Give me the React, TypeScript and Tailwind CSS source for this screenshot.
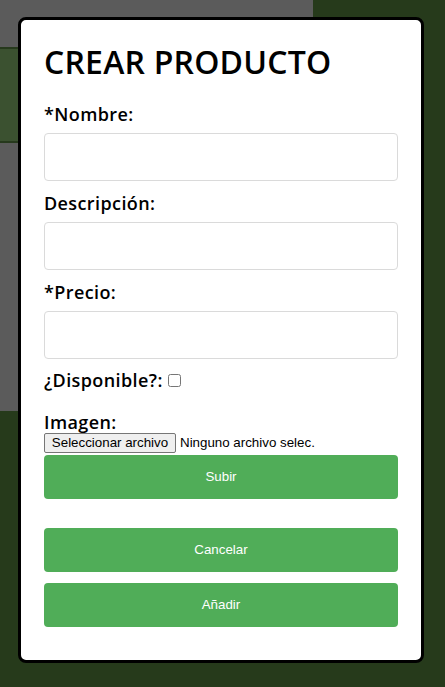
import React from "react";

const labelCls = "block text-[18px] font-semibold leading-[22px] tracking-[0.4px] text-black";
const inputCls = "block h-[48px] w-full rounded-[4px] border border-[#dadada] bg-white px-3 outline-none";
const buttonCls =
  "flex h-[44px] w-full items-center justify-center rounded-[4px] bg-[#50ad58] text-[13.33px] text-white";

function Field({ label, first }: { label: string; first?: boolean }) {
  return (
    <div className={first ? "mt-[22px]" : "mt-[11px]"}>
      <label className={labelCls}>{label}</label>
      <input type="text" className={`${inputCls} mt-[8px]`} />
    </div>
  );
}

export default function App() {
  return (
    <div className="relative h-[687px] w-[445px] overflow-hidden bg-[#263a1b]" style={{ fontFamily: "'Open Sans', Lato, sans-serif" }}>
      {/* page behind the modal */}
      <div className="w-[313px]">
        <div className="h-[47px] bg-[#5b5b5b]" />
        <div className="h-[96px] border-y-2 border-[#26391c] bg-[#3b5130]" />
        <div className="h-[268px] bg-[#5b5b5b]" />
      </div>

      {/* modal */}
      <div className="absolute left-[18px] top-[17px] h-[646px] w-[406px] rounded-[8px] border-[3px] border-black bg-white px-[23px]">
        <h1 className="mt-[23px] text-[32px] font-semibold leading-[38px] tracking-[0.2px] text-black">CREAR PRODUCTO</h1>

        <Field label="*Nombre:" first />
        <Field label="Descripción:" />
        <Field label="*Precio:" />

        <div className="mt-[10px] flex h-[22px] items-center">
          <span className={labelCls}>¿Disponible?:</span>
          <input type="checkbox" className="ml-[5px] h-[13px] w-[13px]" />
        </div>

        <label className={`${labelCls} mt-[20px]`}>Imagen:</label>
        <div className="flex h-[20px] items-center text-[13.33px] text-black" style={{ fontFamily: "'Liberation Sans', Arial, sans-serif" }}>
          <span className="flex h-[20px] w-[132px] items-center justify-center rounded-[2px] border border-[#767676] bg-[#efefef]">
            Seleccionar archivo
          </span>
          <span className="ml-[4px]">Ninguno archivo selec.</span>
        </div>

        <div style={{ fontFamily: "'Liberation Sans', Arial, sans-serif" }}>
          <button className={`${buttonCls} mt-[2px]`}>Subir</button>
          <button className={`${buttonCls} mt-[29px]`}>Cancelar</button>
          <button className={`${buttonCls} mt-[11px]`}>Añadir</button>
        </div>
      </div>
    </div>
  );
}
